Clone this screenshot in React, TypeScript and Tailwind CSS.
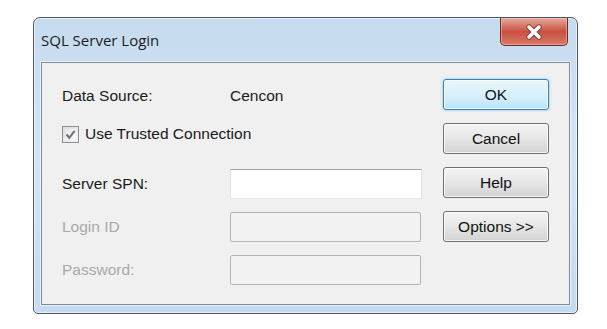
import { useState } from 'react';

const font = "font-['Liberation_Sans',Arial,sans-serif]";

function CloseGlyph() {
  return (
    <svg width="18" height="16" viewBox="0 0 18 16">
      <path d="M4 3 L14 13 M14 3 L4 13" stroke="#3a3a3a" strokeWidth="5.5" strokeLinecap="round" opacity="0.55" />
      <path d="M4 3 L14 13 M14 3 L4 13" stroke="#ffffff" strokeWidth="3.4" strokeLinecap="round" />
    </svg>
  );
}

function CheckBox({ checked }: { checked: boolean }) {
  return (
    <div className="w-[17px] h-[17px] border border-[#8f8f8f] bg-gradient-to-br from-[#dcdcdc] to-[#f6f6f6] p-[2px]">
      <div className="w-full h-full bg-gradient-to-br from-[#e8e8e8] to-[#fbfbfb] flex items-center justify-center">
        {checked && (
          <svg width="11" height="11" viewBox="0 0 11 11">
            <path d="M1.5 5.5 L4.3 8.8 L9.6 1.8" fill="none" stroke="#6a7280" strokeWidth="2.1" />
          </svg>
        )}
      </div>
    </div>
  );
}

function DlgButton({ label, primary }: { label: string; primary?: boolean }) {
  return (
    <button
      className={`h-[31px] w-full rounded-[3px] border text-[15.5px] text-[#111] ${font} ${
        primary
          ? 'border-[#3c7fb1] bg-gradient-to-b from-[#eaf6fd] via-[#d9f0fc] to-[#b9e4fb] shadow-[inset_0_0_0_1px_rgba(255,255,255,0.7),0_0_3px_rgba(60,160,230,0.6)]'
          : 'border-[#707070] bg-gradient-to-b from-[#f4f4f4] via-[#e6e6e6] to-[#d2d2d2] shadow-[inset_0_0_0_1px_rgba(255,255,255,0.8)]'
      }`}
    >
      {label}
    </button>
  );
}

export default function App() {
  const [trusted, setTrusted] = useState(true);

  return (
    <div className="w-[607px] h-[329px] bg-white pt-[17px] pl-[33px]">
      {/* Window frame */}
      <div className="w-[545px] h-[297px] rounded-t-[7px] rounded-b-[5px] border border-[#4a5766] bg-gradient-to-b from-[#c6dbef] via-[#d4e4f4] to-[#c4daf0] shadow-[inset_0_0_0_1px_rgba(255,255,255,0.6)] flex flex-col">
        {/* Title bar */}
        <div className="h-[44px] flex items-start justify-between">
          <span className="pl-[7px] pt-[12px] text-[15px] leading-[20px] text-[#1b1b1b] font-['Open_Sans',sans-serif]">
            SQL Server Login
          </span>
          <div className="mr-[9px] w-[68px] h-[28px] rounded-b-[5px] border border-t-0 border-[#6b2a22] bg-gradient-to-b from-[#e3a99d] via-[#c9503f] to-[#d9796a] shadow-[inset_0_0_0_1px_rgba(255,220,210,0.45)] flex items-center justify-center">
            <CloseGlyph />
          </div>
        </div>

        {/* Client area */}
        <div className="mx-[7px] mb-[8px] flex-1 border border-[#7c8a99] bg-[#f0f0f0] shadow-[0_0_0_1px_rgba(255,255,255,0.6)] flex px-[20px] pt-[16px]">
          <div className={`flex-1 flex flex-col text-[15.5px] text-[#1a1a1a] ${font}`}>
            <div className="mt-[2px] h-[30px] flex items-center">
              <span className="w-[168px]">Data Source:</span>
              <span>Cencon</span>
            </div>
            <label className="mt-[8px] h-[30px] flex items-center gap-[6px] cursor-default" onClick={() => setTrusted(!trusted)}>
              <CheckBox checked={trusted} />
              <span>Use Trusted Connection</span>
            </label>
            <div className="mt-[20px] h-[30px] flex items-center">
              <span className="w-[168px]">Server SPN:</span>
              <div className="w-[192px] h-[30px] bg-white border border-[#e3e9ef] border-t-[#a3a3a3] border-l-[#e2e3ea] border-r-[#e2e3ea]" />
            </div>
            <div className="mt-[13px] h-[30px] flex items-center">
              <span className="w-[168px] text-[#a9a9a9]">Login ID</span>
              <div className="w-[191px] h-[30px] rounded-[2px] bg-[#f2f2f2] border border-[#b4b4b4]" />
            </div>
            <div className="mt-[13px] h-[30px] flex items-center">
              <span className="w-[168px] text-[#a9a9a9]">Password:</span>
              <div className="w-[191px] h-[30px] rounded-[2px] bg-[#f2f2f2] border border-[#b4b4b4]" />
            </div>
          </div>

          <div className="w-[106px] flex flex-col gap-[13px]">
            <DlgButton label="OK" primary />
            <DlgButton label="Cancel" />
            <DlgButton label="Help" />
            <DlgButton label="Options >>" />
          </div>
        </div>
      </div>
    </div>
  );
}
